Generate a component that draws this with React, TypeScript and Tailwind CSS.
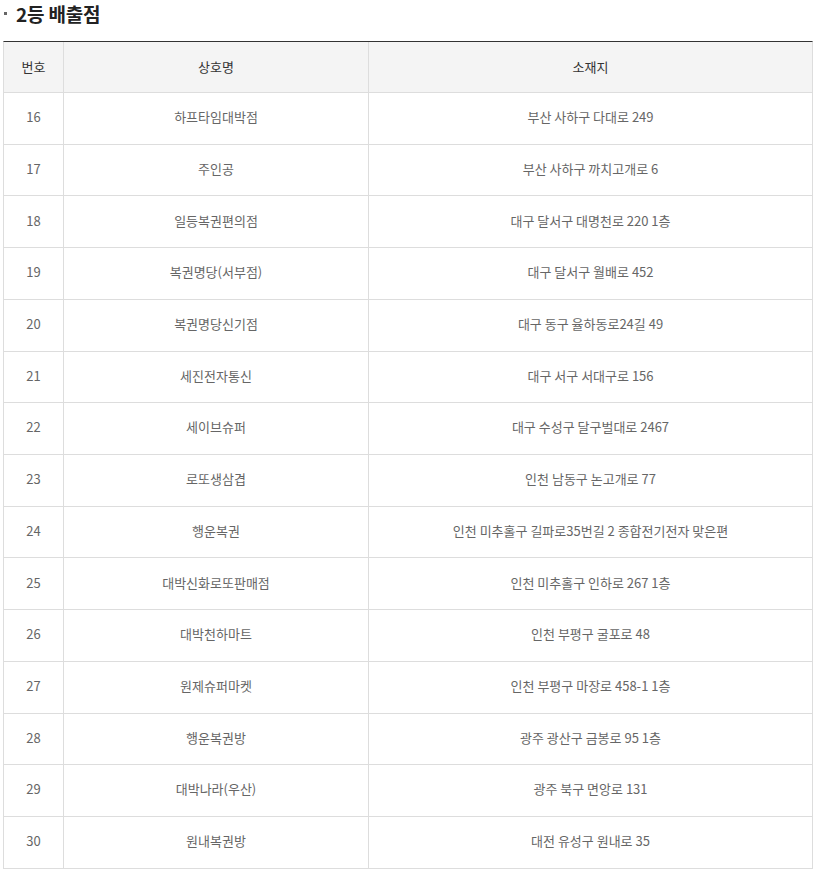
import React from "react";

const rows: [string, string, string][] = [
  ["16", "하프타임대박점", "부산 사하구 다대로 249"],
  ["17", "주인공", "부산 사하구 까치고개로 6"],
  ["18", "일등복권편의점", "대구 달서구 대명천로 220 1층"],
  ["19", "복권명당(서부점)", "대구 달서구 월배로 452"],
  ["20", "복권명당신기점", "대구 동구 율하동로24길 49"],
  ["21", "세진전자통신", "대구 서구 서대구로 156"],
  ["22", "세이브슈퍼", "대구 수성구 달구벌대로 2467"],
  ["23", "로또생삼겹", "인천 남동구 논고개로 77"],
  ["24", "행운복권", "인천 미추홀구 길파로35번길 2 종합전기전자 맞은편"],
  ["25", "대박신화로또판매점", "인천 미추홀구 인하로 267 1층"],
  ["26", "대박천하마트", "인천 부평구 굴포로 48"],
  ["27", "원제슈퍼마켓", "인천 부평구 마장로 458-1 1층"],
  ["28", "행운복권방", "광주 광산구 금봉로 95 1층"],
  ["29", "대박나라(우산)", "광주 북구 면앙로 131"],
  ["30", "원내복권방", "대전 유성구 원내로 35"],
];

export default function App() {
  return (
    <div
      className="w-[814px] h-[870px] bg-white overflow-hidden"
      style={{ fontFamily: '"Noto Sans CJK KR", "Noto Sans", sans-serif' }}
    >
      <div className="flex items-center h-[27px] pl-[4px]">
        <span className="w-[3px] h-[3px] bg-[#666] mr-[9px]" />
        <h2 className="text-[19px] font-bold text-[#222] tracking-[-0.2px] leading-none">
          2등 배출점
        </h2>
      </div>
      <div className="pt-[14px] pl-[3px] pr-[1px]">
        <div className="border-t border-[#333] border-l border-l-[#ddd] border-r border-r-[#ddd] text-[13px] tracking-[0px]">
          <div className="grid grid-cols-[60px_305px_1fr] h-[51px] bg-[#f4f4f4] border-b border-[#ddd] text-[#333]">
            <div className="flex items-center justify-center border-r border-[#ddd]">번호</div>
            <div className="flex items-center justify-center border-r border-[#ddd]">상호명</div>
            <div className="flex items-center justify-center">소재지</div>
          </div>
          {rows.map(([n, name, addr]) => (
            <div
              key={n}
              className="grid grid-cols-[60px_305px_1fr] h-[51.73px] border-b border-[#ddd] text-[#666]"
            >
              <div className="flex items-center justify-center border-r border-[#ddd] pb-[3px]">{n}</div>
              <div className="flex items-center justify-center border-r border-[#ddd] pb-[3px]">{name}</div>
              <div className="flex items-center justify-center pb-[3px]">{addr}</div>
            </div>
          ))}
        </div>
      </div>
    </div>
  );
}
